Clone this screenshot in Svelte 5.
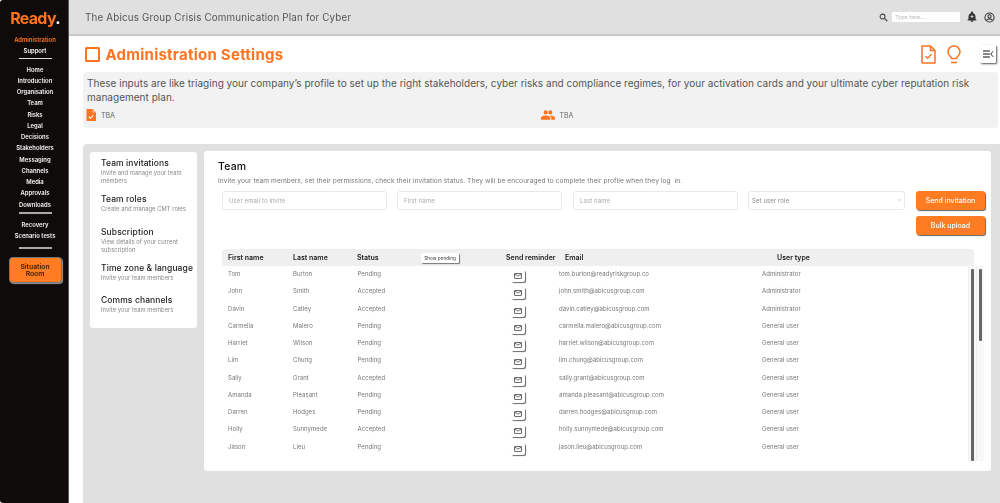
<script>
  const nav1 = ['Home','Introduction','Organisation','Team','Risks','Legal','Decisions','Stakeholders','Messaging','Channels','Media','Approvals','Downloads'];
  const sections = [
    { t: 'Team invitations', s: 'Invite and manage your team members', c: 'a' },
    { t: 'Team roles', s: 'Create and manage CMT roles', c: 'b' },
    { t: 'Subscription', s: 'View details of your current subscription', c: 'c' },
    { t: 'Time zone & language', s: 'Invite your team members', c: 'd' },
    { t: 'Comms channels', s: 'Invite your team members', c: 'e' }
  ];
  const A = 'Administrator', G = 'General user', P = 'Pending', C = 'Accepted', D = '@abicusgroup.com';
  const rows = [
    ['Tom','Burton',P,'tom.burton@readyriskgroup.co',A],
    ['John','Smith',C,'john.smith'+D,A],
    ['Davin','Catley',C,'davin.catley'+D,A],
    ['Carmella','Malero',P,'carmella.malero'+D,G],
    ['Harriet','Wilson',P,'harriet.wilson'+D,G],
    ['Lim','Chung',P,'lim.chung'+D,G],
    ['Sally','Grant',C,'sally.grant'+D,G],
    ['Amanda','Pleasant',P,'amanda.pleasant'+D,G],
    ['Darren','Hodges',P,'darren.hodges'+D,G],
    ['Holly','Sunnymede',C,'holly.sunnymede'+D,G],
    ['Jason','Lieu',P,'jason.lieu'+D,G],
    ['','','','','']
  ];
</script>

<div class="app">
  <aside class="side">
    <div class="logo">Ready<span>.</span></div>
    <div class="item active">Administration</div>
    <div class="item">Support</div>
    <div class="rule r1"></div>
    {#each nav1 as n}<div class="item">{n}</div>{/each}
    <div class="rule r2"></div>
    <div class="item">Recovery</div>
    <div class="item">Scenario tests</div>
    <div class="rule r3"></div>
    <button class="situation">Situation Room</button>
  </aside>

  <div class="main">
    <header class="top">
      <div class="plan">The Abicus Group Crisis Communication Plan for Cyber</div>
      <svg class="ic-search" viewBox="0 0 24 24" width="9" height="9"><circle cx="9.5" cy="9.5" r="6.5" fill="none" stroke="#444" stroke-width="2.800"/><path d="M14.500 14.500 22 22" stroke="#444" stroke-width="3.200"/></svg>
      <div class="search">Type here...</div>
      <svg class="ic-bell" viewBox="0 0 24 24" width="12" height="12"><path fill="#333" d="M12 22a2.500 2.500 0 0 0 2.500-2.500h-5A2.500 2.500 0 0 0 12 22zm7-6v-5c0-3.200-1.800-5.800-4.700-6.600V3.500a2.300 2.300 0 0 0-4.600 0v.9C6.800 5.200 5 7.800 5 11v5l-2 2v.8h18V18z"/><path stroke="#e0e0e0" stroke-width="1.800" d="M12 8v6M9 11h6"/></svg>
      <svg class="ic-user" viewBox="0 0 24 24" width="11" height="11"><circle cx="12" cy="12" r="10" fill="none" stroke="#333" stroke-width="2.200"/><circle cx="12" cy="9.500" r="3.500" fill="none" stroke="#333" stroke-width="2.200"/><path d="M5.500 18.500c1.500-2.500 3.800-3.500 6.500-3.500s5 1 6.500 3.500" fill="none" stroke="#333" stroke-width="2.200"/></svg>
    </header>

    <section class="content">
      <div class="titlerow">
        <div class="square"></div>
        <h1>Administration Settings</h1>
        <svg class="ic-doc" viewBox="0 0 15 19" width="15" height="19"><path d="M1 1h8.500L14 5.500V18H1z" fill="none" stroke="#ff7420" stroke-width="1.500" stroke-linejoin="round"/><path d="M9.500 1v4.500H14" fill="none" stroke="#ff7420" stroke-width="1.500"/><path d="m4.500 11 2.200 2.300 3.800-4" fill="none" stroke="#ff7420" stroke-width="1.300"/></svg>
        <svg class="ic-bulb" viewBox="0 0 14 19" width="14" height="19"><path d="M4.500 13.500C4.300 11.500 1 10.300 1 6.700a6 5.800 0 0 1 12 0c0 3.600-3.300 4.800-3.500 6.800z" fill="none" stroke="#ff7420" stroke-width="1.500" stroke-linejoin="round"/><path d="M4 17.500h6" stroke="#ff7420" stroke-width="1.600"/></svg>
        <button class="menu-btn" aria-label="Collapse menu"><svg viewBox="0 0 12 8" width="11" height="8"><path d="M0 .7h7.500M0 4h7.500M0 7.300h7.500" stroke="#111" stroke-width="1.200"/><path d="M11 1 8.500 4 11 7" fill="none" stroke="#111" stroke-width="1"/></svg></button>
      </div>

      <div class="info">
        <p>These inputs are like triaging your company’s profile to set up the right stakeholders, cyber risks and compliance regimes, for your activation cards and your ultimate cyber reputation risk management plan.</p>
        <div class="tba">
          <div class="tba-item">
            <svg viewBox="0 0 10 12" width="10" height="12"><path d="M.5 0h6L10 3.500V12H.5z" fill="#ff7420"/><path d="M6.500 0v3.500H10" fill="#ffb489"/><path d="m2.800 7.600 1.700 1.700 2.900-3.100" fill="none" stroke="#fff" stroke-width="1.100"/></svg>
            <span>TBA</span>
          </div>
          <div class="tba-item second">
            <svg viewBox="0 0 24 24" width="14" height="14"><path fill="#ff7420" d="M16 11a3.500 3.500 0 1 0 0-7 3.500 3.500 0 0 0 0 7zm-8 0a3.500 3.500 0 1 0 0-7 3.500 3.500 0 0 0 0 7zm0 2c-2.700 0-8 1.300-8 4v3h16v-3c0-2.700-5.300-4-8-4zm8 0h-1c1.500 1 2.500 2.300 2.500 4v3H24v-3c0-2.700-5.300-4-8-4z"/></svg>
            <span>TBA</span>
          </div>
        </div>
      </div>

      <div class="panel">
        <nav class="sections">
          {#each sections as s}
            <div class="sec {s.c}">
              <div class="sec-t">{s.t}</div>
              <div class="sec-s">{s.s}</div>
            </div>
          {/each}
        </nav>

        <div class="team">
          <h2>Team</h2>
          <p class="lead">Invite your team members, set their permissions, check their invitation status. They will be encouraged to complete their profile when they log&nbsp; in.</p>

          <div class="form">
            <div class="field f1">User email to invite</div>
            <div class="field f2">First name</div>
            <div class="field f3">Last name</div>
            <div class="field f4 select"><span>Set user role</span><svg viewBox="0 0 6 4" width="3" height="2"><path d="m.5.500 2.500 3 2.500-3" fill="none" stroke="#999"/></svg></div>
            <div class="actions">
              <button class="orange">Send invitation</button>
              <button class="orange">Bulk upload</button>
            </div>
          </div>

          <div class="thead">
            <span class="h1c">First name</span>
            <span class="h2c">Last name</span>
            <span class="h3c">Status</span>
            <button class="pending">Show pending</button>
            <span class="h5c">Send reminder</span>
            <span class="h6c">Email</span>
            <span class="h7c">User type</span>
          </div>

          <div class="tbody">
            <div class="rows">
              {#each rows as r}
                <div class="row">
                  <span>{r[0]}</span>
                  <span>{r[1]}</span>
                  <span>{r[2]}</span>
                  <span class="mailcell">
                    <button class="mail" aria-label="Send reminder"><svg viewBox="0 0 10 8" width="8" height="6"><rect x=".5" y=".5" width="9" height="7" rx=".8" fill="none" stroke="#222"/><path d="m.8 1.200 4.200 3 4.200-3" fill="none" stroke="#222" stroke-width=".9"/></svg></button>
                  </span>
                  <span>{r[3]}</span>
                  <span>{r[4]}</span>
                </div>
              {/each}
            </div>
            <div class="track"><div class="thumb long"></div></div>
            <div class="track"><div class="thumb short"></div></div>
          </div>
        </div>
      </div>
    </section>
  </div>
</div>

<style>
  :global(body) { margin: 0; background: #fff; font-family: Inter, "Liberation Sans", sans-serif; }
  .app { display: flex; width: 1000px; height: 503px; overflow: hidden; filter: blur(.3px); }

  .side { width: 69px; flex: none; box-sizing: border-box; background: #0f0b0b; border-right: 1px solid #555; border-radius: 3px 0 0 3px; padding-left: 2px; display: flex; flex-direction: column; align-items: center; color: #f4f4f4; }
  .logo { color: #ff7420; font-size: 16px; font-weight: 700; letter-spacing: -0.7px; line-height: 24px; margin-top: 6px; margin-bottom: 4px; height: 24px; }
  .logo span { color: #fff; }
  .item { font-size: 5.900px; font-weight: 600; line-height: 11.250px; white-space: nowrap; }
  .item.active { color: #ff7420; }
  .rule { width: 33px; height: 1px; background: #ddd; flex: none; }
  .r1 { margin: 1.500px 0 4.500px; }
  .r2 { width: 33px; height: 2px; background: #aaa; margin: 2.500px 0 4.500px; }
  .r3 { width: 33px; height: 2px; background: #aaa; margin: 6px 0 9px; }
  .situation { width: 51px; height: 24px; padding: 1px 6px; border: 0; border-radius: 3px; background: #ff7c22; color: #3a1a05; font: 600 6.800px/7px Inter, sans-serif; box-shadow: 0 0 0 1px #777, 1px 1px 1px 1px #999; }

  .main { flex: 1; min-width: 0; display: flex; flex-direction: column; }
  .top { height: 34px; flex: none; background: #e0e0e0; border-bottom: 2px solid #c8c8c8; display: flex; align-items: center; padding-left: 16px; padding-right: 5px; }
  .plan { flex: 1; font-size: 9.800px; color: #555; letter-spacing: .18px; }
  .ic-search { margin-right: 4px; }
  .search { width: 68px; height: 10px; box-sizing: border-box; background: #fff; border-radius: 1px; font-size: 5.300px; line-height: 10px; color: #bbb; padding-left: 3px; }
  .ic-bell { margin-left: 6px; }
  .ic-user { margin-left: 6px; }

  .content { flex: 1; min-height: 0; display: flex; flex-direction: column; padding-left: 14px; }
  .titlerow { display: flex; align-items: center; height: 36px; flex: none; }
  .square { width: 11px; height: 11px; border: 2px solid #ff7420; border-radius: 1.500px; margin-left: 1.500px; }
  h1 { flex: 1; margin: 0 0 0 6px; font-size: 15px; font-weight: 700; color: #ff7420; letter-spacing: .25px; }
  .ic-doc { margin-right: 11px; }
  .ic-bulb { margin-right: 19px; }
  .menu-btn { width: 16px; height: 18px; padding: 0; border: 0; border-radius: 1px; background: #fff; box-shadow: 1px 1px 2px #555; margin-right: 4px; display: flex; align-items: center; justify-content: center; }

  .info { height: 56px; margin-right: 2px; box-sizing: border-box; background: #f2f2f2; border-radius: 4px; padding: 4px 3px 0; flex: none; }
  .info p { margin: 0; padding-left: 1px; font-size: 10px; line-height: 14px; color: #555; letter-spacing: .02px; width: 905px; }
  .tba { display: flex; margin-top: 4px; }
  .tba-item { display: flex; align-items: center; gap: 5px; font-size: 7px; color: #666; width: 455px; height: 14px; }

  .panel { flex: 1; min-height: 0; margin-top: 16px; margin-left: 0; background: #e0e0e0; border-radius: 4px 0 0 0; display: flex; padding: 7px 9px 0 7px; gap: 7px; align-items: flex-start; }
  .sections { width: 107px; height: 176px; flex: none; box-sizing: border-box; background: #fff; border-radius: 3px; margin-top: 1px; padding-left: 11px; position: relative; }
  .sec { position: absolute; left: 11px; width: 90px; }
  .sec.a { top: 4.500px; } .sec.b { top: 40.500px; } .sec.c { top: 73.500px; } .sec.d { top: 109.500px; } .sec.e { top: 141.500px; }
  .sec-t { font-size: 8.500px; line-height: 12px; font-weight: 500; color: #222; white-space: nowrap; letter-spacing: .1px; }
  .sec-s { font-size: 5.800px; line-height: 7.500px; color: #888; letter-spacing: .05px; margin-top: .500px; }

  .team { flex: 1; height: 320px; box-sizing: border-box; background: #fff; border-radius: 3px; padding: 9px 6px 0 14px; display: flex; flex-direction: column; }
  h2 { margin: 0; font-size: 10.500px; line-height: 13px; font-weight: 500; color: #111; letter-spacing: .2px; }
  .lead { margin: 3px 0 0; font-size: 6.600px; line-height: 10px; color: #777; letter-spacing: .08px; white-space: nowrap; }
  .form { display: flex; margin-top: 4.500px; margin-left: 4px; height: 58.500px; align-items: flex-start; flex: none; }
  .field { box-sizing: border-box; height: 19px; border: 1px solid #e8e8e8; border-radius: 3px; font-size: 6px; line-height: 17px; color: #aaa; padding-left: 6px; flex: none; letter-spacing: .1px; }
  .f1 { width: 165px; margin-right: 10px; }
  .f2 { width: 165px; margin-right: 11px; }
  .f3 { width: 165px; margin-right: 10px; }
  .f4 { width: 157px; margin-right: 11px; padding-left: 3px; color: #888; display: flex; justify-content: space-between; align-items: center; padding-right: 3px; }
  .actions { display: flex; flex-direction: column; gap: 6.500px; }
  .orange { width: 69px; height: 19px; padding: 0; border: 0; border-radius: 3px; background: #ff7c22; color: #fff; font: 500 7px Inter, sans-serif; box-shadow: 1px 1px 1px #666; }

  .thead { position: relative; margin-left: 4px; width: 752px; height: 17px; flex: none; background: #efefef; border-radius: 4px 4px 0 0; font-size: 7px; font-weight: 600; color: #222; line-height: 17px; }
  .thead span, .pending { position: absolute; top: 0; white-space: nowrap; }
  .h1c { left: 6px; } .h2c { left: 71px; } .h3c { left: 135px; } .h5c { left: 284px; } .h6c { left: 343px; } .h7c { left: 555px; }
  .pending { left: 199px; top: 4px; width: 38px; height: 10px; padding: 0; border: 0; border-radius: 1px; background: #fff; font: 400 4.700px Inter, sans-serif; color: #444; box-shadow: 1px 1px 1px #777; }

  .tbody { display: flex; margin-left: 4px; height: 195px; flex: none; overflow: hidden; }
  .rows { width: 746px; flex: none; }
  .row { display: grid; grid-template-columns: 65px 64.500px 64px 137.500px 203px 1fr; padding-left: 6px; height: 17.250px; line-height: 15px; font-size: 6px; color: #777; letter-spacing: .05px; white-space: nowrap; }
  .mailcell { position: relative; }
  .mail { position: absolute; left: 89px; top: 4px; width: 14px; height: 12px; padding: 0; border: 0; border-radius: 2px; background: #fff; box-shadow: 1px 1px 1px #666; display: flex; align-items: center; justify-content: center; }

  .track { width: 8px; flex: none; background: #f8f8f8; border-left: 1px solid #eee; box-sizing: border-box; position: relative; }
  .thumb { position: absolute; left: 2px; top: 3px; width: 3px; background: #666; border-radius: 1px; }
  .thumb.long { height: 192px; }
  .thumb.short { height: 72px; }
</style>
